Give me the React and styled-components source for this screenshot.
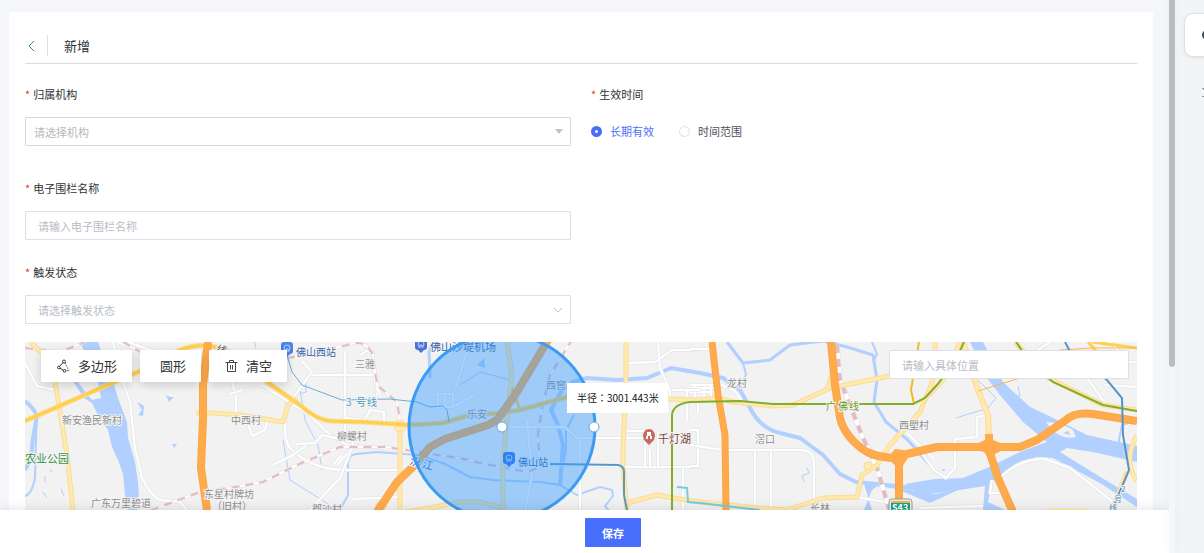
import React from "react";
import styled, { createGlobalStyle, css } from "styled-components";

const GlobalStyle = createGlobalStyle`
  * { box-sizing: border-box; }
  body {
    margin: 0;
    background: #f5f6fa;
    color: #303133;
    font: 11px/20px "Noto Sans CJK SC", sans-serif;
    overflow: hidden;
  }
  button, input, select { font: inherit; color: inherit; margin: 0; }
`;

const Page = styled.div`
  display: flex;
  height: 100vh;
`;

const Main = styled.main`
  flex: 1;
  min-width: 0;
  display: flex;
  flex-direction: column;
`;

const Content = styled.div`
  flex: 1;
  min-height: 0;
  overflow: hidden;
  display: flex;
  flex-direction: column;
  padding: 12px 16px 0 9px;
`;

const Card = styled.section`
  flex: 1;
  min-height: 0;
  display: flex;
  flex-direction: column;
  padding: 0 16px;
  background: #fff;
  border-radius: 2px 2px 0 0;
`;

const Header = styled.header`
  flex: none;
  display: flex;
  align-items: center;
  height: 52px;
  padding-top: 16px;
  border-bottom: 1px solid #d9d9e6;
`;

const BackButton = styled.button`
  display: flex;
  align-items: center;
  width: 23px;
  height: 21px;
  padding: 0 0 0 3px;
  border: 0;
  border-right: 1px solid #dcdfe6;
  background: none;
`;

const Title = styled.h1`
  margin: 0 0 0 16px;
  font-size: 13px;
  line-height: 20px;
  font-weight: 400;
`;

const Form = styled.form`
  flex: none;
  display: grid;
  grid-template-columns: 1fr 1fr;
  column-gap: 20px;
  padding: 20px 0 18px;
`;

const Field = styled.div`
  grid-column: ${(p) => p.$column || 1};
  margin-bottom: ${(p) => p.$gap || 0}px;
`;

const FieldGroup = styled.fieldset`
  grid-column: 2;
  grid-row: 1;
  min-width: 0;
  margin: 0;
  padding: 0;
  border: 0;
`;

const labelStyle = css`
  display: block;
  height: 20px;
  margin-bottom: 13px;
  padding: 0;
  &::before {
    content: "*";
    margin-right: 3px;
    color: #f5301c;
  }
`;
const Label = styled.label`${labelStyle}`;
const Legend = styled.legend`${labelStyle}`;

const boxStyle = css`
  display: block;
  width: 100%;
  height: 29px;
  border: 1px solid #dcdfe6;
  border-radius: 1px;
  background: #fff;
  outline: none;
`;

const TextInput = styled.input`
  ${boxStyle}
  padding: 0 12px;
  &::placeholder { color: #b8bcc6; opacity: 1; }
`;

const SelectWrap = styled.div`
  position: relative;
  svg {
    position: absolute;
    right: 8px;
    top: 0;
    height: 100%;
    pointer-events: none;
  }
`;

const Select = styled.select`
  ${boxStyle}
  appearance: none;
  padding: 0 ${(p) => p.$inset}px;
  border-color: ${(p) => p.$border || "#dcdfe6"};
  color: ${(p) => p.$color || "#b8bcc6"};
`;

const RadioRow = styled.div`
  display: flex;
  gap: 25px;
  height: 28px;
  align-items: center;
`;

const RadioLabel = styled.label`
  display: flex;
  align-items: center;
  gap: 8px;
  color: ${(p) => (p.$active ? "#4a6ffb" : "#505256")};
`;

const Radio = styled.input`
  appearance: none;
  width: 11px;
  height: 11px;
  border: 1px solid #dcdfe6;
  border-radius: 50%;
  background: #fff;
  &:checked {
    border: 4px solid #456ff8;
  }
`;

const MapArea = styled.div`
  position: relative;
  flex: 1;
  min-height: 168px;
  overflow: hidden;
  background: #f2f2f2;
`;

const MapDrawing = styled.svg`
  display: block;
  position: absolute;
  inset: 0;
  width: 100%;
  height: 100%;
`;

const MapControls = styled.div`
  position: absolute;
  top: 8px;
  left: 16px;
  right: 8px;
  display: flex;
  gap: 8px;
  align-items: flex-start;
`;

const ToolButton = styled.button`
  display: flex;
  align-items: center;
  gap: 8px;
  height: 32px;
  padding: 0 15px 0 ${(p) => (p.$plain ? 20 : 16)}px;
  border: 0;
  border-radius: 1px;
  background: #fff;
  font-size: 13px;
  box-shadow: 0 3px 10px rgba(0, 0, 0, 0.16);
  white-space: nowrap;
`;

const SearchInput = styled(TextInput)`
  width: 240px;
  margin-left: auto;
`;

const RadiusTip = styled.output`
  position: absolute;
  left: 542px;
  top: 41px;
  padding: 5px 9px 5px 10px;
  background: #fff;
  color: #111;
  font-family: "Noto Sans CJK TC", sans-serif;
  font-size: 10px;
  white-space: nowrap;
`;

const Footer = styled.footer`
  position: relative;
  display: flex;
  justify-content: center;
  height: 43px;
  padding: 8px 0 6px 57px;
  background: #fff;
  box-shadow: 0 -2px 10px rgba(0, 0, 0, 0.09);
`;

const SaveButton = styled.button`
  width: 56px;
  height: 29px;
  padding: 0;
  border: 0;
  border-radius: 1px;
  background: #476ffb;
  color: #fff;
  font-weight: 700;
`;

const ScrollTrack = styled.div`
  position: relative;
  width: 6px;
  background: #f5f6fa;
  box-shadow: 0 0 12px rgba(0, 0, 0, 0.04);
`;

const ScrollThumb = styled.div`
  height: 367px;
  border-radius: 0 0 3px 3px;
  background: #bbbcbd;
`;

const SideRail = styled.aside`
  width: 29px;
  overflow: hidden;
  padding: 13px 0 0 9px;
  background: #f3f4f6;
`;

const RailTile = styled.button`
  display: flex;
  align-items: center;
  width: 48px;
  height: 44px;
  padding: 0 0 0 17px;
  border: 1px solid #e0e1e4;
  border-radius: 9px;
  background: #fff;
  box-shadow: 0 1px 3px rgba(0, 0, 0, 0.08);
`;

const RailIcon = styled.div`
  margin: 30px 0 0 18px;
  height: 10px;
  color: #999;
`;

const Road = ({ d, c = "#fff", w = 2, edge }) => (
  <g fill="none" strokeLinejoin="round" strokeLinecap="butt">
    {edge && <path d={d} stroke={edge} strokeWidth={w + 2} />}
    <path d={d} stroke={c} strokeWidth={w} />
  </g>
);

const Railway = ({ d, w = 2 }) => (
  <g fill="none">
    <path d={d} stroke="#e9dee1" strokeWidth={w + 1} />
    <path d={d} stroke="#fff" strokeWidth={w} />
    <path d={d} stroke="#e0bcc3" strokeWidth={w} strokeDasharray="8 6" />
  </g>
);

const WATER = "#b1cfff";
const PALE = "#ffe9b0";
const PALE_EDGE = "#fbdc92";
const GOLD = "#ffd04f";
const ORANGE = "#ffab4c";
const ORANGE_EDGE = "#fba647";

const streams = [
  ["M25 401Q33 407 37 416L33 438L31 458L25 470", 4],
  ["M37 416L36 440L35 478Q32 494 25 496", 2],
  ["M340 510L348 495V462Q349 455 356 454L377 452L417 455L443 463L470 477L493 480L540 482L560 485L577 495L600 487L612 490L613 496L605 506L610 512", 2],
  ["M560 485L563 445L558 425L551 410L562 390L573 382L587 378L617 380L647 378L671 368L700 373L723 378L740 390L750 408Q760 428 780 433L800 438L823 455L840 474L856 482L897 486L930 490", 4],
  ["M727 342L743 363L770 360L790 345L823 341L847 347L873 355L877 380L874 402L886 422L908 440L934 470", 3],
  ["M743 363L746 374L740 390", 2],
  ["M872 342L877 354L873 362", 2],
  ["M434 342L429 352L430 378", 3],
  ["M460 385L480 372L510 380", 1],
  ["M978 380L996 398L988 408L975 412L956 418", 1],
  ["M1137 420L1122 425L1119 440L1122 455", 2],
  ["M283 440L290 480L330 505M300 390L305 420L318 445L322 470", 1],
  ["M804 482L802 476L809 473L807 468", 1],
  ["M256 348L254 341M306 383L306 392L300 394", 1],
  ["M45 476V482M43 492L47 498M61 489L64 496M50 469L52 472", 1],
  ["M1018 386L1020 396L1016 396", 1],
  ["M574 415L566 430V450L562 470", 2],
];

const streets = [
  "M25 363L37 386L55 390",
  "M113 342L123 382L130 402L135 448L142 478Q150 495 160 500L180 502L187 510",
  "M118 342L190 372M128 342L155 352M230 372L236 398V414",
  "M230 394L242 390",
  "M345 352V432M310 375H377V395",
  "M302 361L312 372L293 398Q279 425 289 447Q310 469 343 470H417",
  "M262 385L310 415L330 435L347 445L403 450",
  "M313 441L293 455L273 465M355 432L352 448L337 465",
  "M353 445L340 478L310 510",
  "M248 423L252 436L265 430L268 418",
  "M360 355L372 348L375 382L380 395",
  "M345 418L365 420L370 410L384 412V422",
  "M296 444L315 443L322 435L345 440",
  "M342 455L333 465M353 499L400 497",
  "M438 394H453V407H438ZM453 407L475 395M470 342L455 390M445 394V408",
  "M508 427H565L577 438H690M580 438V510M527 420L532 475L525 510",
  "M506 462L545 464L640 467H700",
  "M625 363L655 362L672 350H700M658 342L660 368L670 390V400",
  "M625 431H655M645 431V467M658 431V467M650 450V467M683 467V510",
  "M690 385H715M690 392H712M690 388H716M695 385V401M704 385V401M711 385V401",
  "M672 390H700M687 390V420M690 430H698V466H690M698 413V401",
  "M720 384L735 391L741 400",
  "M690 445L723 450L803 450Q813 452 814 460V502",
  "M755 450V510M771 450V510",
  "M857 497L890 503M690 349H708L712 345",
  "M908 434L935 460",
  "M988 415L977 417V437L955 439V468L946 478L934 470L922 453",
  "M1000 478Q1020 458 1045 459L1070 468L1113 502",
  "M992 480L990 493H999",
  "M920 508L983 506",
  "M1087 378L1105 403M1105 385L1137 387",
  "M1035 352L1050 342M1110 342L1120 352M1125 362H1137",
];

const mapLabels = [
  ["新安渔民新村", 62, 424, "#8e8e8e", 10],
  ["中西村", 231, 424, "#8e8e8e", 10],
  ["三雅", 355, 368, "#999", 10],
  ["柳螺村", 337, 440, "#8e8e8e", 10],
  ["广东万里碧道", 91, 507, "#8e8e8e", 10],
  ["东星村牌坊", 204, 498, "#8e8e8e", 10],
  ["（旧村）", 212, 510, "#8e8e8e", 10],
  ["郡沙村", 312, 513, "#8e8e8e", 10],
  ["佛山西站", 296, 356, "#3b5fa4", 10],
  ["佛山沙堤机场", 430, 351, "#3b5fa4", 11],
  ["佛山站", 518, 466, "#2f5fa8", 10],
  ["西窖", 546, 389, "#8e8e8e", 10],
  ["乐安", 467, 418, "#8e8e8e", 10],
  ["千灯湖", 658, 443, "#7a4a3e", 11],
  ["龙村", 727, 387, "#8e8e8e", 10],
  ["滘口", 755, 443, "#8e8e8e", 10],
  ["西塱村", 899, 429, "#8e8e8e", 10],
  ["长林", 810, 512, "#8e8e8e", 10],
  ["农业公园", 25, 463, "#3a9143", 11],
];

const Pin = ({ x, y, color }) => (
  <g transform={`translate(${x} ${y})`}>
    <path d="M0 8L-3 5H-3Q-6 5 -6 2V-4Q-6 -7 -3 -7H3Q6 -7 6 -4V2Q6 5 3 5H3Z" fill={color} />
    <circle cy="-1" r="3" fill="none" stroke="#b9d2ff" />
    <path d="M-2 3L-1 0H1L2 3" fill="none" stroke="#b9d2ff" />
  </g>
);

function CityMap() {
  return (
    <MapDrawing role="img" aria-label="地图">
      <g transform="translate(-25 -342)">
        <g fill={WATER}>
          <path d="M80 342L98 382L101 398L92 400L84 390L77 381H73L84 398L92 403L97 413L108 430L112 447L118 460L123 474L125 495L128 510H137L139 498L138 482L135 462L128 438L127 422L118 398L113 382L98 342Z" />
          <path d="M970 342L987 378L1000 395L1023 422L1047 442L1020 452L987 468L963 478L935 479L905 484L920 495L953 491L985 486L983 510H1005L988 502L992 482L1020 463L1037 457L1053 458L1100 483L1137 507V499L1097 475L1060 452L1067 448L1093 452L1137 462V446L1087 435L1047 415L1030 407L1003 382L983 342Z" />
          <path d="M864 484L872 510H864L872 490L880 484L905 489L935 494L960 489L930 503L897 489Z" />
          <path d="M137 402L144 406L143 416L138 415L142 410ZM166 395L170 397L174 397L169 402ZM172 444L177 444L174 448Z" />
          <path d="M477 365L484 358L485 368ZM942 469L947 470L942 471ZM1084 471L1098 475L1096 477Z" />
        </g>
        <path d="M1046 422Q1060 422 1073 430L1076 437Q1063 440 1052 430Z" fill="#f2f2f2" />
        <path d="M1063 433L1068 431L1070 435Z" fill={WATER} />
        {streams.map(([d, w]) => <Road key={d} d={d} c={WATER} w={w} />)}
        {streets.map((d) => <Road key={d} d={d} edge="#e9eaec" w={2} />)}

        <Railway d="M25 348L60 352L85 342M123 342L158 362M138 515L200 492L230 488L263 482L297 465L340 447L387 447L470 460L480 463L527 472L540 467L538 435L542 408L550 375L573 338" />
        <Railway d="M287 358L317 353L347 345Q366 338 373 355L377 385L397 402L400 420" />
        <Railway d="M837 345L840 380L863 438L877 468L890 512" w={4} />

        {[
          ["M30 342L55 365L55 382L60 412L67 455L73 510", 3],
          ["M196 413H213L240 415L283 422L288 405L297 398", 3],
          ["M400 422V510", 3],
          ["M507 342L512 375L507 418L503 462V510M503 508L480 502H460L430 508L405 512", 3],
          ["M626 342V385L623 448V468L627 510", 3],
          ["M627 503L657 495L673 498L700 502L757 508L787 510L823 498L857 497L862 475L877 465L890 445L920 412L930 388L935 372V342", 3],
          ["M665 399L700 400L717 398L733 402L773 406L793 405L830 388L890 376", 3],
          ["M963 342L978 390L988 415L989 437", 4],
          ["M920 404L945 378L960 342M1015 342L1048 378L1103 405L1137 410", 3],
          ["M1137 435Q1126 455 1132 472L1137 482M1127 472L1112 510", 3],
          ["M828 389L832 376", 4],
        ].map(([d, w]) => <Road key={d} d={d} c={PALE} edge={PALE_EDGE} w={w} />)}
        <circle cx="400" cy="426" r="6" fill={PALE} stroke={PALE_EDGE} />
        <circle cx="868" cy="466" r="4" fill={PALE} stroke={PALE_EDGE} />
        <circle cx="381" cy="506" r="5" fill={PALE} stroke={PALE_EDGE} />
        <path d="M1043 512L1048 508H1085L1091 512Z" fill={PALE} />

        <Road d="M25 421L140 371L180 350Q205 340 230 352L267 382L300 405Q317 420 330 421L363 422L410 425L443 423L470 415L500 413L520 410L567 397L620 399L665 399" c={GOLD} edge={PALE_EDGE} w={3} />
        <Road d="M512 388L520 410M1088 342L1100 355M1092 342L1137 348" c={GOLD} w={3} />
        <path d="M978 391L1020 378M1060 350L1092 348H1137" fill="none" stroke="#ffb54d" strokeWidth="1" />
        <path d="M919 342L911 390L914 404" fill="none" stroke="#efbd25" strokeWidth="2" />

        <Road d="M208 342L203 385V418L201 468L207 510" c={ORANGE} edge={ORANGE_EDGE} w={6} />
        <Road d="M377 512L397 482L417 463L430 447L445 439L488 425L497 420L517 392L548 340" c={ORANGE} edge={ORANGE_EDGE} w={6} />
        <Road d="M712 342L718 395L725 435L726 510" c={ORANGE} edge={ORANGE_EDGE} w={5} />
        <Road d="M831 342L835 385L840 418Q845 438 867 452Q880 458 897 458L907 454L937 447H1020L1037 440L1066 420Q1075 412 1093 414L1137 421" c={ORANGE} edge={ORANGE_EDGE} w={6} />
        <Road d="M899 453V505M989 435V450L998 478L1013 512" c={ORANGE} edge={ORANGE_EDGE} w={6} />
        <path d="M887 458L895 449L904 450L910 455L900 470ZM976 444L985 440V434H993V440L1003 444V450L995 454L991 462L984 452L976 450Z" fill={ORANGE} />

        <g fill="none" strokeWidth="2">
          <path d="M287 355L292 372L302 385L342 400L390 399L417 402L430 407L443 406L447 410L449 422" stroke="#6aafdc" strokeWidth="1" />
          <path d="M672 510V415Q673 404 690 402L740 401L773 404H913L925 398L937 385L955 362L964 342M1016 342L1030 362L1053 382L1103 405L1137 411" stroke="#82ad2e" />
          <path d="M550 464L618 465Q624 466 624 472V495L627 510" stroke="#579ac4" />
          <path d="M677 487L687 488L688 502L700 503L760 510" stroke="#74cde0" />
          <path d="M1065 342L1072 355L1107 380L1122 398L1123 435L1129 470L1112 510" stroke="#5594cb" />
        </g>

        <g stroke="#f5f5f5" strokeWidth="2" paintOrder="stroke" strokeLinejoin="round">
          {mapLabels.map(([text, x, y, fill, size]) => (
            <text key={text} x={x} y={y} fill={fill} fontSize={size}>{text}</text>
          ))}
          <text y="406" fill="#4d99c4" fontSize="10"><tspan x="346">3</tspan><tspan x="356">号</tspan><tspan x="367">线</tspan></text>
          <text y="410" fill="#709b20" fontSize="10"><tspan x="826">广</tspan><tspan x="838">佛</tspan><tspan x="849">线</tspan></text>
          <text x="216" y="352" fill="#555" fontSize="10" transform="rotate(15 216 352)">线</text>
          <text fill="#3b74cf" fontSize="11" transform="rotate(15 409 464)"><tspan x="409" y="464">汾</tspan><tspan x="422" y="464">江</tspan></text>
          <g fill="#4a8cc0" fontSize="8">
            <text x="1121" y="492">2</text>
            <text x="1114" y="502">号</text>
            <text x="1109" y="511">线</text>
          </g>
        </g>
        <Pin x={287} y={349} color="#4c82ea" />
        <Pin x={421} y={345} color="#4c72d8" />
        <Pin x={509} y={459} color="#286fea" />
        <g transform="translate(649 436)">
          <path d="M0 9L-3 6Q-6 4 -6 -1Q-5 -7 0 -7Q5 -7 6 -1Q6 4 3 6Z" fill="#c96b62" />
          <path d="M-3 3V0H-2V-4H2V0H3V3H1V0H-1V3Z" fill="#fff" />
        </g>
        <rect x="889" y="499" width="23" height="20" rx="3" fill="#eee" stroke="#999" />
        <path d="M891 501H910V503H891Z" fill="#efb54b" />
        <path d="M891 503H910V519H891Z" fill="#14a586" />
        <text x="892" y="511" fill="#fff" fontSize="9" fontWeight="700">S43</text>

        <circle cx="502" cy="427" r="93" fill="#39f" fillOpacity="0.44" stroke="#3a9bf5" strokeWidth="3" />
        <circle cx="502" cy="427" r="5" fill="#fff" stroke="#6ba3e8" />
        <circle cx="594" cy="427" r="5" fill="#fff" stroke="#6ba3e8" />
      </g>
    </MapDrawing>
  );
}

const PolygonIcon = () => (
  <svg width="13" height="14" viewBox="0 0 13 14" fill="none" stroke="#333">
    <circle cx="7" cy="2.5" r="1.5" />
    <circle cx="1.8" cy="8.5" r="1.3" />
    <circle cx="7.5" cy="11.8" r="1.3" />
    <path d="M6 3.6L2.5 7.4M3 9.2L6.3 11.4" />
    <path d="M8 4L12 11.8H9" strokeDasharray="1 1" />
  </svg>
);

const TrashIcon = () => (
  <svg width="13" height="14" viewBox="0 0 13 14" fill="none" stroke="#444">
    <path d="M0.5 3.5H12.5M4.5 3V1.5H8.5V3M2.5 3.5V12.5H10.5V3.5M5.5 6V10.5M7.5 6V10.5" />
  </svg>
);

export default function App() {
  const [validity, setValidity] = React.useState("long");
  return (
    <>
      <GlobalStyle />
      <Page>
        <Main>
          <Content>
            <Card>
              <Header>
                <BackButton type="button" aria-label="返回">
                  <svg width="7" height="12" viewBox="0 0 7 12" fill="none" stroke="#2f7fa8">
                    <path d="M6 1L1 6L6 11" />
                  </svg>
                </BackButton>
                <Title>新增</Title>
              </Header>
              <Form id="fence-form" onSubmit={(e) => e.preventDefault()}>
                <Field $gap={32}>
                  <Label htmlFor="org">归属机构</Label>
                  <SelectWrap>
                    <Select id="org" $inset={8} $border="#d9d9d9" $color="#b8b8b8">
                      <option>请选择机构</option>
                    </Select>
                    <svg width="8" viewBox="0 0 8 29"><path d="M0 12H8L4 17Z" fill="#c4c4c4" /></svg>
                  </SelectWrap>
                </Field>
                <FieldGroup>
                  <Legend>生效时间</Legend>
                  <RadioRow>
                    {[["long", "长期有效"], ["range", "时间范围"]].map(([value, text]) => (
                      <RadioLabel key={value} $active={validity === value}>
                        <Radio type="radio" name="validity" value={value} checked={validity === value} onChange={() => setValidity(value)} />
                        {text}
                      </RadioLabel>
                    ))}
                  </RadioRow>
                </FieldGroup>
                <Field $gap={22}>
                  <Label htmlFor="name">电子围栏名称</Label>
                  <TextInput id="name" placeholder="请输入电子围栏名称" />
                </Field>
                <Field>
                  <Label htmlFor="state">触发状态</Label>
                  <SelectWrap>
                    <Select id="state" $inset={12}>
                      <option>请选择触发状态</option>
                    </Select>
                    <svg width="10" viewBox="0 0 10 29" fill="none" stroke="#bcc0c9"><path d="M1 13L5 17L9 13" /></svg>
                  </SelectWrap>
                </Field>
              </Form>
              <MapArea>
                <CityMap />
                <RadiusTip>半径：3001.443米</RadiusTip>
                <MapControls>
                  <ToolButton type="button"><PolygonIcon />多边形</ToolButton>
                  <ToolButton type="button" $plain>圆形</ToolButton>
                  <ToolButton type="button"><TrashIcon />清空</ToolButton>
                  <SearchInput aria-label="具体位置" placeholder="请输入具体位置" />
                </MapControls>
              </MapArea>
            </Card>
          </Content>
          <Footer>
            <SaveButton type="submit" form="fence-form">保存</SaveButton>
          </Footer>
        </Main>
        <ScrollTrack><ScrollThumb /></ScrollTrack>
        <SideRail>
          <RailTile type="button" aria-label="面板">
            <svg width="10" height="10" viewBox="0 0 10 10"><circle cx="5" cy="5" r="4" fill="#bbb" stroke="#444b57" strokeWidth="2" /></svg>
          </RailTile>
          <RailIcon>
            <svg width="10" height="10" viewBox="0 0 10 10" fill="none" stroke="currentColor" display="block"><path d="M0 1.5H8M0 9.5H8M1 2L4 5" /></svg>
          </RailIcon>
        </SideRail>
      </Page>
    </>
  );
}
